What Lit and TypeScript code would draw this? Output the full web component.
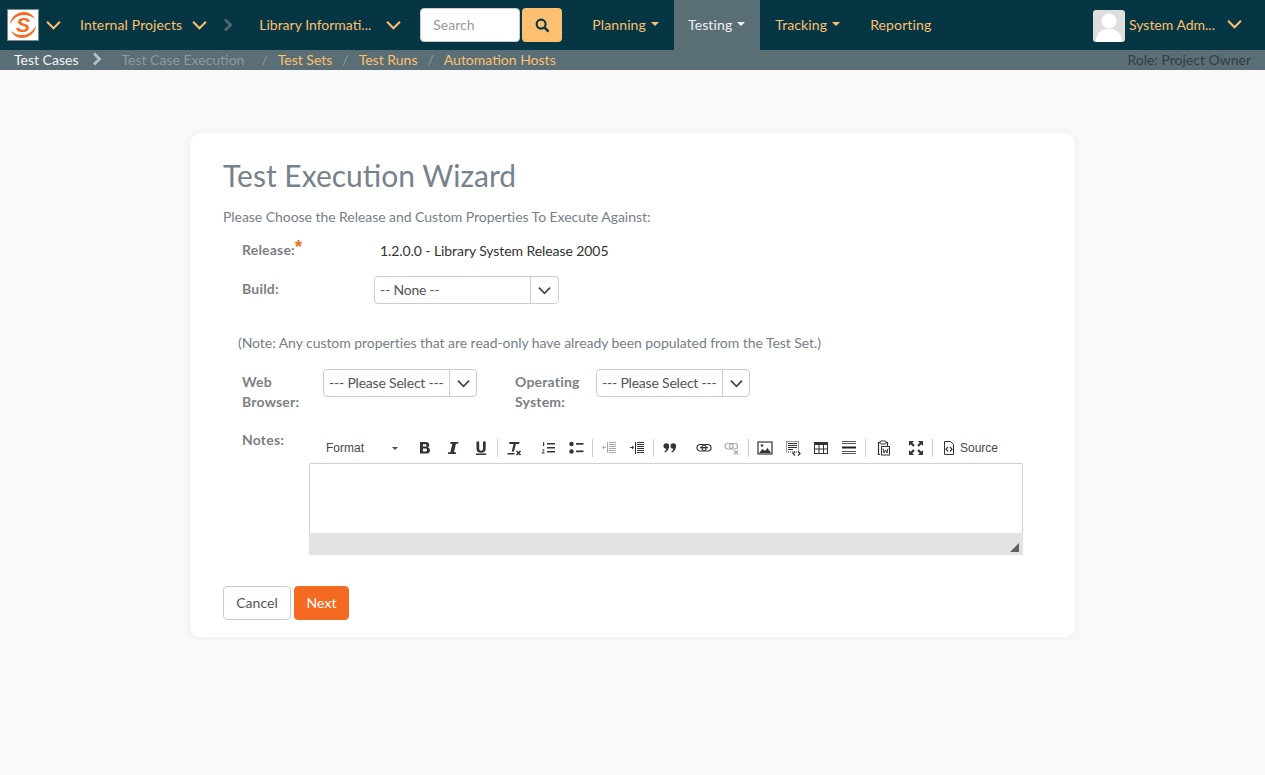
import { LitElement, css, html, svg } from 'lit';
import { customElement } from 'lit/decorators.js';

const chevron = (cls = 'chev') => html`<svg class=${cls} viewBox="0 0 14 9" width="15" height="10">
  <path d="M1 1.500l6 6 6-6" fill="none" stroke="currentColor" stroke-width="1.900"/>
</svg>`;

const ic = (body: unknown) => html`<svg viewBox="0 0 16 16" width="16" height="16">${body}</svg>`;

// toolbar glyphs, in 16px boxes like the editor's own icon strip
const lines = (rows: [number, number, number][], color = '#333') =>
  rows.map(([x, y, w]) => svg`<rect x=${x} y=${y} width=${w} height="1" fill=${color}/>`);

const icons: Record<string, unknown> = {
  bold: svg`<path d="M3 2h5.600c2.300 0 3.700 1.100 3.700 3 0 1.100-.6 2-1.600 2.400 1.400.3 2.300 1.400 2.300 2.800 0 2.100-1.500 3.400-4 3.400H3zM5.900 4.200v2.400h2.200c.9 0 1.400-.5 1.400-1.200s-.5-1.200-1.400-1.200zM5.900 8.600v3h2.500c1 0 1.600-.6 1.600-1.500s-.6-1.500-1.700-1.500z" fill="#333" fill-rule="evenodd"/>`,
  italic: svg`<path d="M5.500 2h8l-.4 1.800h-2.200l-1.900 8.400h2.200l-.4 1.800h-8l.4-1.800h2.200l1.900-8.400H5.100z" fill="#333"/>`,
  underline: svg`<path d="M3.500 1.500h2.700v6.700c0 1.700.6 2.500 1.900 2.500s1.900-.8 1.900-2.500V1.500h2.700v6.900c0 2.900-1.600 4.300-4.600 4.300s-4.600-1.400-4.600-4.300z M3 13.500h10.200V15H3z" fill="#333"/>`,
  clear: svg`<path d="M3.500 2h10l-.4 2H9.900L8 11.500H5.700l1.900-7.500H3.100z M1.500 13h7v1.500h-7z" fill="#333"/><path d="M10.500 11l4 4M14.500 11l-4 4" stroke="#333" stroke-width="1.500"/>`,
  ol: svg`<path d="M3 2.500l1.200-.5v4H3z M2 9.800c.4-.6 2.400-.8 2.400.5 0 1-1.400 1.500-1.600 2.200h1.800v.9H1.900c0-1.800 1.600-2.200 1.600-3 0-.5-.8-.4-1.200 0z" fill="#333"/><rect x="7" y="3" width="8" height="1.500" fill="#333"/><rect x="7" y="7" width="8" height="1.500" fill="#333"/><rect x="7" y="11" width="8" height="1.500" fill="#333"/>`,
  ul: svg`<circle cx="3.500" cy="4" r="2.200" fill="#333"/><circle cx="3.500" cy="11.500" r="2.200" fill="#333"/><rect x="8" y="3" width="7.500" height="1.700" fill="#333"/><rect x="8" y="10.500" width="7.500" height="1.700" fill="#333"/>`,
  outdent: svg`${lines([[8, 2, 7], [8, 4, 7], [8, 6, 7], [8, 8, 7], [8, 10, 7], [8, 12, 7]], '#aaa')}<rect x="6" y="2" width="1" height="11" fill="#aaa"/><path d="M1 7.500l2-2v1.500h2v1H3v1.500z" fill="#aaa"/>`,
  indent: svg`${lines([[8, 2, 7], [8, 4, 7], [8, 6, 7], [8, 8, 7], [8, 10, 7], [8, 12, 7]])}<rect x="6" y="2" width="1" height="12" fill="#333"/><path d="M5 7.500l-2-2v1.500H1v1h2v1.500z" fill="#333"/>`,
  quote: svg`<circle cx="4.300" cy="6" r="2.800" fill="#333"/><path d="M7 6c0 3-1.500 5.500-4 6.500l-.6-1c1.500-1 2-2.500 2-4z" fill="#333"/><circle cx="11.300" cy="6" r="2.800" fill="#333"/><path d="M14 6c0 3-1.500 5.500-4 6.500l-.6-1c1.500-1 2-2.500 2-4z" fill="#333"/>`,
  link: svg`<rect x="1" y="4.500" width="9" height="6.500" rx="3.200" fill="none" stroke="#333" stroke-width="1.200"/><rect x="6" y="4.500" width="9" height="6.500" rx="3.200" fill="none" stroke="#333" stroke-width="1.200"/><rect x="4" y="7" width="8" height="1.300" fill="#333"/>`,
  unlink: svg`<rect x="1" y="3.500" width="8" height="5.500" rx="2.700" fill="none" stroke="#aaa" stroke-width="1.200"/><rect x="5.500" y="3.500" width="8" height="5.500" rx="2.700" fill="none" stroke="#aaa" stroke-width="1.200"/><path d="M10 10.500l4 4M14 10.500l-4 4" stroke="#aaa" stroke-width="1.400"/>`,
  image: svg`<rect x="1" y="2" width="14" height="12" fill="#fff" stroke="#333" stroke-width="1.200"/><path d="M2 13l3.500-4 2.500 2 2.500-3 3.500 5z" fill="#333"/><circle cx="5" cy="5.500" r="1.200" fill="#333"/>`,
  snippet: svg`<rect x="1.500" y="1.500" width="12" height="10.500" fill="none" stroke="#333" stroke-dasharray="1 1"/>${lines([[3, 3, 9], [3, 5, 9], [3, 7, 9], [3, 9, 5]])}<path d="M10 11.500l-2 2 2 2M13 11.500l2 2-2 2" fill="none" stroke="#333" stroke-width="1.200"/>`,
  table: svg`<rect x="1" y="2" width="14" height="3" fill="#333"/><rect x="1.500" y="2.500" width="13" height="11" fill="none" stroke="#333"/><path d="M1.500 9h13M6 5v8.500M10.500 5v8.500" stroke="#333"/>`,
  hr: svg`${lines([[1, 1, 14], [1, 3, 14], [1, 11, 14], [1, 13, 14]], '#555')}<rect x="1" y="6.500" width="14" height="2" fill="#222"/>`,
  paste: svg`<path d="M5 2.500H3.500v12H5M11 2.500h1.500V6" fill="none" stroke="#333" stroke-width="1.200"/><rect x="5" y="1" width="6" height="3" rx="1" fill="#fff" stroke="#333"/><rect x="6.500" y="6.500" width="8" height="8.500" fill="#fff" stroke="#333"/><path d="M8 8.500l1 4.500 1.500-3 1.500 3 1-4.500" fill="none" stroke="#333"/>`,
  maximize: svg`<path d="M1 1h5L4.300 2.700l2.500 2.500-1.600 1.600-2.500-2.500L1 6zM15 1v5l-1.700-1.700-2.500 2.500-1.600-1.600 2.500-2.500L10 1zM1 15v-5l1.700 1.700 2.500-2.500 1.600 1.600-2.500 2.500L6 15zM15 15h-5l1.700-1.700-2.500-2.500 1.600-1.600 2.500 2.500L15 10z" fill="#333"/>`,
  source: svg`<path d="M3.500 1.500h6l3 3v10h-9z" fill="#fff" stroke="#333"/><path d="M7 7l-2 2.200L7 11.400M9 7l2 2.200-2 2.200" fill="none" stroke="#333" stroke-width="1.200"/>`,
};

// sep = divider after the button, gap = extra space before it
const toolbar: { name: string; gap?: number; sep?: number }[] = [
  { name: 'bold' },
  { name: 'italic' },
  { name: 'underline', sep: 1 },
  { name: 'clear' },
  { name: 'ol', gap: 6 },
  { name: 'ul', sep: 1 },
  { name: 'outdent' },
  { name: 'indent', sep: 1 },
  { name: 'quote' },
  { name: 'link', gap: 6 },
  { name: 'unlink', sep: 1 },
  { name: 'image' },
  { name: 'snippet' },
  { name: 'table' },
  { name: 'hr', sep: 1 },
  { name: 'paste', gap: 1 },
  { name: 'maximize', gap: 5, sep: 1 },
];

@customElement('app-root')
export class AppRoot extends LitElement {
  static styles = css`
    :host {
      display: block;
      min-height: 775px;
      background: #f9f9f9;
      font-family: Lato, "Open Sans", sans-serif;
      font-size: 14px;
      color: #555;
    }
    .topbar {
      display: flex;
      align-items: center;
      height: 50px;
      background: #063543;
      color: #fdc071;
      letter-spacing: 0.12px;
    }
    .logo {
      display: flex;
      margin-left: 7px;
      width: 32px;
      height: 32px;
      box-sizing: border-box;
      background: #fff;
      border: 1px solid #7d8a90;
    }
    .logo-wrap {
      position: relative;
      width: 30px;
      height: 30px;
    }
    .logo-s {
      position: absolute;
      inset: 0;
      text-align: center;
      font: italic 700 21px/30px "Liberation Sans", sans-serif;
      color: #f26d21;
    }
    .chev {
      display: block;
      flex: none;
    }
    .crumb-arrow {
      display: block;
      flex: none;
    }
    .m47 { margin-left: 7px; }
    .nav-link {
      margin-top: -2px;
      white-space: nowrap;
    }
    .project { margin-left: 19px; }
    .project + .chev { margin-left: 10px; }
    .sep-arrow { margin-left: 16px; color: #4d666f; }
    .library { margin-left: 26px; letter-spacing: 0; }
    .library + .chev { margin-left: 15px; }
    .search {
      display: flex;
      gap: 2px;
      margin-left: 19px;
      letter-spacing: 0;
    }
    .search-input {
      width: 100px;
      height: 34px;
      box-sizing: border-box;
      padding: 0 12px;
      line-height: 32px;
      background: #fff;
      border: 1px solid #ccc;
      border-radius: 4px;
      color: #999;
    }
    .search-btn {
      display: flex;
      align-items: center;
      justify-content: center;
      width: 40px;
      height: 34px;
      background: #fdc071;
      border-radius: 4px;
    }
    .menu {
      display: flex;
      margin-left: 16px;
      height: 50px;
    }
    .menu-item {
      display: flex;
      align-items: center;
      gap: 5px;
      box-sizing: border-box;
      padding: 0 15px 2px 14px;
      white-space: nowrap;
    }
    .menu-item.active {
      background: #5a6e75;
      color: #f2f2f2;
    }
    .menu-item.track { padding: 0 16px 2px 15px; }
    .caret {
      width: 0;
      height: 0;
      border-left: 4px solid transparent;
      border-right: 4px solid transparent;
      border-top: 4px solid currentColor;
    }
    .user {
      display: flex;
      align-items: center;
      margin-left: auto;
      margin-right: 23px;
    }
    .avatar {
      display: block;
      width: 32px;
      height: 32px;
      margin-top: 2px;
      border-radius: 3px;
      background: #dedede;
    }
    .user-name {
      margin-left: 4px;
      margin-top: -2px;
      width: 85px;
      white-space: nowrap;
      letter-spacing: 0;
    }
    .user .chev { margin-left: 13px; margin-top: -2px; }

    .subbar {
      display: flex;
      align-items: center;
      box-sizing: border-box;
      height: 20px;
      padding: 0 14px 2px;
      background: #5a6e75;
      white-space: nowrap;
    }
    .sub-current { color: #f5f5f5; }
    .subbar .crumb-arrow { margin-left: 14px; color: #b4bfc3; }
    .sub-muted { margin-left: 19px; color: #8b9aa0; }
    .slash { color: #8b9aa0; margin: 0 10px; }
    .slash.first { margin-left: 17px; }
    .sub-link { color: #fdc071; }
    .role { margin-left: auto; color: #333f44; }

    .card {
      box-sizing: border-box;
      width: 885px;
      height: 504px;
      margin: 63px auto 0;
      padding: 22px 33px 0;
      background: #fff;
      border-radius: 10px;
      box-shadow: 0 0 6px rgba(0, 0, 0, 0.07);
      letter-spacing: -0.05px;
    }
    h1 {
      margin: 0;
      font-size: 30px;
      font-weight: 400;
      line-height: 40px;
      letter-spacing: 0;
      color: #78828c;
    }
    .intro {
      margin: 12px 0 0;
      line-height: 20px;
      color: #76808a;
    }
    .label {
      font-weight: 700;
      color: #7b7f85;
      line-height: 20px;
      letter-spacing: 0.2px;
    }
    .row {
      display: flex;
      padding-left: 19px;
    }
    .release-row {
      margin-top: 14px;
      height: 20px;
    }
    .release-row .label { width: 138px; margin-top: -1px; }
    .req {
      color: #f26d21;
      font: 700 18px/10px "Liberation Sans", sans-serif;
      vertical-align: 2px;
    }
    .release-value { margin-top: 1px; color: #333; letter-spacing: -0.08px; }
    .build-row {
      margin-top: 15px;
      height: 28px;
    }
    .build-row .label { width: 132px; padding-top: 3px; }
    .select {
      display: flex;
      flex: none;
      box-sizing: border-box;
      height: 28px;
      border: 1px solid #ccc;
      border-radius: 4px;
      background: #fff;
      color: #555;
      line-height: 26px;
    }
    .select-text {
      flex: 1;
      padding-left: 5px;
      white-space: nowrap;
      overflow: hidden;
      letter-spacing: -0.2px;
    }
    .select-btn {
      display: flex;
      align-items: center;
      justify-content: center;
      width: 27px;
      border-left: 1px solid #ccc;
      color: #444;
    }
    .select-btn .chev {
      width: 13px;
      height: 9px;
    }
    .w185 { width: 185px; }
    .w154 { width: 154px; }
    .w154 .select-btn { width: 26px; }
    .note {
      margin: 29px 0 0 15px;
      line-height: 20px;
      color: #76808a;
    }
    .props {
      margin-top: 16px;
      height: 48px;
    }
    .props .label { flex: none; padding-top: 3px; }
    .prop-browser { width: 81px; }
    .prop-os { width: 81px; margin-left: 38px; }
    .notes-row { margin-top: 13px; height: 146px; }
    .notes-row .label { flex: none; width: 67px; }
    .editor {
      width: 714px;
    }
    .tools {
      display: flex;
      align-items: center;
      height: 28px;
      padding-left: 1px;
      font-family: "Liberation Sans", Arial, sans-serif;
      font-size: 12px;
      letter-spacing: 0;
      color: #484848;
      margin-top: 4px;
    }
    .format {
      display: flex;
      align-items: center;
      flex: none;
      box-sizing: border-box;
      width: 101px;
      padding: 0 13px 0 16px;
      justify-content: space-between;
    }
    .format .caret { border-width: 3px 3px 0; border-top-color: #484848; }
    .tool {
      display: flex;
      flex: none;
      align-items: center;
      justify-content: center;
      width: 28px;
      height: 20px;
    }
    .divider {
      flex: none;
      width: 1px;
      height: 18px;
      margin: 0 2px;
      background: #ccc;
    }
    .source {
      display: flex;
      align-items: center;
      gap: 3px;
      margin-left: 6px;
    }
    .edit-area {
      box-sizing: border-box;
      height: 70px;
      margin-top: 1px;
      background: #fff;
      border: 1px solid #d1d1d1;
      border-bottom: 0;
      border-radius: 2px 2px 0 0;
    }
    .edit-foot {
      display: flex;
      align-items: flex-end;
      justify-content: flex-end;
      box-sizing: border-box;
      height: 22px;
      padding: 0 4px 3px 0;
      background: #e3e3e3;
    }
    .grip {
      width: 0;
      height: 0;
      border-left: 9px solid transparent;
      border-bottom: 9px solid #5f5f5f;
    }
    .actions {
      display: flex;
      gap: 3px;
      margin-top: 10px;
    }
    .btn {
      box-sizing: border-box;
      width: 68px;
      height: 34px;
      line-height: 32px;
      text-align: center;
      letter-spacing: 0.05px;
      border: 1px solid #ccc;
      border-radius: 4px;
      background: #fff;
      color: #555;
    }
    .btn.primary {
      width: 55px;
      background: #f56a22;
      border-color: #f56a22;
      color: #fff;
    }
  `;

  renderTool(t: { name: string; gap?: number; sep?: number }) {
    return html`
      ${t.gap ? html`<span style="width:${t.gap}px;flex:none"></span>` : ''}
      <span class="tool">${ic(icons[t.name])}</span>
      ${t.sep ? html`<span class="divider"></span>` : ''}
    `;
  }

  render() {
    return html`
      <div class="topbar">
        <div class="logo">
          <div class="logo-wrap">
            <svg viewBox="0 0 30 30" width="30" height="30">
              <path d="M2 14C3 6 10 2 16 2c5 0 9 3 11 7-4-3-7-4-11-4C10 5 6 8 2 14zM28 16c-1 8-8 12-14 12-5 0-9-3-11-7 4 3 7 4 11 4 6 0 10-3 14-9z" fill="#f26d21"/>
            </svg>
            <span class="logo-s">S</span>
          </div>
        </div>
        <span class="m47">${chevron()}</span>
        <span class="nav-link project">Internal Projects</span>
        ${chevron()}
        <svg class="crumb-arrow sep-arrow" viewBox="0 0 10 14" width="10" height="14">
          <path d="M2 1.500L7.500 7 2 12.500" fill="none" stroke="currentColor" stroke-width="3"/>
        </svg>
        <span class="nav-link library">Library Informati...</span>
        ${chevron()}
        <div class="search">
          <div class="search-input">Search</div>
          <div class="search-btn">
            <svg viewBox="0 0 16 16" width="15" height="15">
              <circle cx="6.500" cy="6.500" r="4.800" fill="none" stroke="#063543" stroke-width="2.200"/>
              <path d="M10 10l4.500 4.500" stroke="#063543" stroke-width="2.600"/>
            </svg>
          </div>
        </div>
        <div class="menu">
          <div class="menu-item">Planning <span class="caret"></span></div>
          <div class="menu-item active">Testing <span class="caret"></span></div>
          <div class="menu-item track">Tracking <span class="caret"></span></div>
          <div class="menu-item">Reporting</div>
        </div>
        <div class="user">
          <svg class="avatar" viewBox="0 0 32 32">
            <circle cx="16" cy="11" r="7.500" fill="#fff"/>
            <path d="M3 32c0-9 5-13 13-13s13 4 13 13z" fill="#fff"/>
          </svg>
          <span class="user-name">System Adm...</span>
          ${chevron()}
        </div>
      </div>

      <div class="subbar">
        <span class="sub-current">Test Cases</span>
        <svg class="crumb-arrow" viewBox="0 0 10 14" width="10" height="14">
          <path d="M2 1.500L7.500 7 2 12.500" fill="none" stroke="currentColor" stroke-width="3"/>
        </svg>
        <span class="sub-muted">Test Case Execution</span>
        <span class="slash first">/</span>
        <span class="sub-link">Test Sets</span>
        <span class="slash">/</span>
        <span class="sub-link">Test Runs</span>
        <span class="slash">/</span>
        <span class="sub-link">Automation Hosts</span>
        <span class="role">Role: Project Owner</span>
      </div>

      <div class="card">
        <h1>Test Execution Wizard</h1>
        <p class="intro">Please Choose the Release and Custom Properties To Execute Against:</p>

        <div class="row release-row">
          <div class="label">Release:<span class="req">*</span></div>
          <div class="release-value">1.2.0.0 - Library System Release 2005</div>
        </div>

        <div class="row build-row">
          <div class="label">Build:</div>
          <div class="select w185">
            <span class="select-text">-- None --</span>
            <span class="select-btn">${chevron()}</span>
          </div>
        </div>

        <p class="note">(Note: Any custom properties that are read-only have already been populated from the Test Set.)</p>

        <div class="row props">
          <div class="label prop-browser">Web<br />Browser:</div>
          <div class="select w154">
            <span class="select-text">--- Please Select ---</span>
            <span class="select-btn">${chevron()}</span>
          </div>
          <div class="label prop-os">Operating<br />System:</div>
          <div class="select w154">
            <span class="select-text">--- Please Select ---</span>
            <span class="select-btn">${chevron()}</span>
          </div>
        </div>

        <div class="row notes-row">
          <div class="label">Notes:</div>
          <div class="editor">
            <div class="tools">
              <div class="format">Format <span class="caret"></span></div>
              ${toolbar.map((t) => this.renderTool(t))}
              <span class="source">${ic(icons.source)} Source</span>
            </div>
            <div class="edit-area"></div>
            <div class="edit-foot"><span class="grip"></span></div>
          </div>
        </div>

        <div class="actions">
          <div class="btn">Cancel</div>
          <div class="btn primary">Next</div>
        </div>
      </div>
    `;
  }
}
